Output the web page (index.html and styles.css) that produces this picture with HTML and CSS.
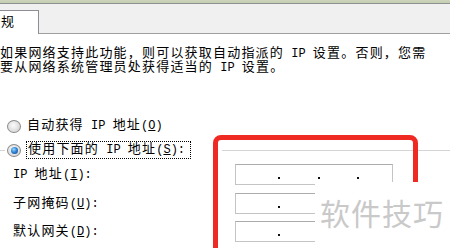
FILE: index.html
```html
<!DOCTYPE html>
<html>
<head>
<meta charset="utf-8">
<link rel="stylesheet" href="styles.css">
</head>
<body>
<div class="win">
  <div class="tabbar"><div class="tab">规</div></div>
  <p class="desc">如果网络支持此功能，则可以获取自动指派的<span class="en"> IP </span>设置。否则，您需<br>要从网络系统管理员处获得适当的<span class="en"> IP </span>设置。</p>
  <div class="radio-row first">
    <span class="radio"></span>
    <span class="rlabel">自动获得<span class="en"> IP </span>地址<span class="en">(<u>O</u>)</span></span>
  </div>
  <div class="radio-row legend">
    <span class="gline left"></span>
    <span class="radio checked"></span>
    <span class="rlabel focus">使用下面的<span class="en"> IP </span>地址<span class="en">(<u>S</u>):</span></span>
    <span class="gline right"></span>
  </div>
  <div class="fields">
    <div class="flabel"><span class="en">IP </span>地址<span class="en">(<u>I</u>):</span></div>
    <div class="ipbox"><span class="seg s1"></span><span class="dot"></span><span class="seg s2"></span><span class="dot"></span><span class="seg s3"></span><span class="dot"></span></div>
    <div class="flabel">子网掩码<span class="en">(<u>U</u>):</span></div>
    <div class="ipbox"><span class="seg s1"></span><span class="dot"></span><span class="seg s2"></span><span class="dot"></span><span class="seg s3"></span><span class="dot"></span></div>
    <div class="flabel">默认网关<span class="en">(<u>D</u>):</span></div>
    <div class="ipbox"><span class="seg s1"></span><span class="dot"></span><span class="seg s2"></span><span class="dot"></span><span class="seg s3"></span><span class="dot"></span></div>
  </div>
  <div class="mark"></div>
  <div class="watermark">软件技巧</div>
</div>
</body>
</html>
```

FILE: styles.css
```css
html, body {
  margin: 0;
  padding: 0;
  background: #ffffff;
}
.win {
  position: relative;
  width: 450px;
  height: 248px;
  overflow: hidden;
  background: #ffffff;
  color: #000000;
  font-family: "Liberation Mono", "Noto Sans CJK SC", monospace;
  font-size: 13px;
  letter-spacing: 1.2px;
}
.en {
  font-size: 12px;
  letter-spacing: 0;
  white-space: pre;
}
u {
  text-decoration: underline;
  text-underline-offset: 1px;
}
.tabbar {
  box-sizing: border-box;
  height: 34px;
  display: flex;
  align-items: flex-end;
  background: linear-gradient(to bottom, #cdd6bd 0, #c3cdb1 3px, #8e9290 3px, #8e9290 4px, #f0f0f0 4px, #f0f0f0 100%);
  border-bottom: 1px solid #a0a0a0;
}
.tab {
  box-sizing: border-box;
  width: 39px;
  height: 24px;
  margin-bottom: -1px;
  padding: 4px 0 0 1px;
  line-height: 16px;
  background: #ffffff;
  border-top: 1px solid #8c8e94;
  border-right: 1px solid #8c8e94;
}
.desc {
  margin: 13px 0 0 0;
  line-height: 13px;
  white-space: nowrap;
}
.radio-row {
  display: flex;
  align-items: center;
  height: 24px;
}
.radio-row.first {
  margin-top: 39px;
  padding-left: 7px;
}
.radio {
  box-sizing: border-box;
  width: 14px;
  height: 13px;
  border-radius: 50%;
  border: 1px solid #8a8a8a;
  background: radial-gradient(circle at 45% 40%, #fbfbfb 0, #e6e6e6 45%, #c9c9c9 100%);
  flex: none;
  display: flex;
  align-items: center;
  justify-content: center;
}
.radio.checked::after {
  content: "";
  width: 7px;
  height: 7px;
  border-radius: 50%;
  background: radial-gradient(circle at 40% 35%, #9fd6ff 0, #2f86d8 45%, #0d3f86 100%);
}
.rlabel {
  margin-left: 6px;
  line-height: 16px;
  white-space: nowrap;
}
.rlabel.focus {
  box-sizing: border-box;
  margin-left: 5px;
  width: 165px;
  height: 18px;
  padding-left: 1px;
  border: 1px dotted #000000;
}
.gline {
  height: 1px;
  background: #d5d5d5;
}
.gline.left {
  width: 5px;
  margin-right: 2px;
}
.gline.right {
  flex: 1;
  margin-left: 31px;
}
.fields {
  display: grid;
  grid-template-columns: 222px 158px;
  grid-auto-rows: 21px;
  row-gap: 7.5px;
  margin-top: 2px;
  padding-left: 13px;
}
.flabel {
  line-height: 21px;
  white-space: nowrap;
}
.ipbox {
  box-sizing: border-box;
  display: flex;
  align-items: flex-end;
  padding-bottom: 5px;
  border: 1px solid #c4c4c4;
  border-top-color: #acacac;
  background: #ffffff;
}
.seg {
  height: 2px;
}
.seg.s1 { width: 42px; }
.seg.s2 { width: 38px; }
.seg.s3 { width: 37px; }
.dot {
  width: 2px;
  height: 2px;
  background: #111111;
}
.mark {
  position: absolute;
  left: 213px;
  top: 135px;
  width: 205px;
  height: 140px;
  box-sizing: border-box;
  border: 5px solid #ef2a22;
  border-radius: 8px;
}
.watermark {
  position: absolute;
  left: 315px;
  top: 182px;
  width: 135px;
  height: 66px;
  box-sizing: border-box;
  padding: 14px 0 0 5px;
  background: #ffffff;
  color: #c9c9c9;
  font-family: "Noto Sans CJK SC", sans-serif;
  font-size: 30px;
  line-height: 32px;
  letter-spacing: 1px;
  white-space: nowrap;
}
```
